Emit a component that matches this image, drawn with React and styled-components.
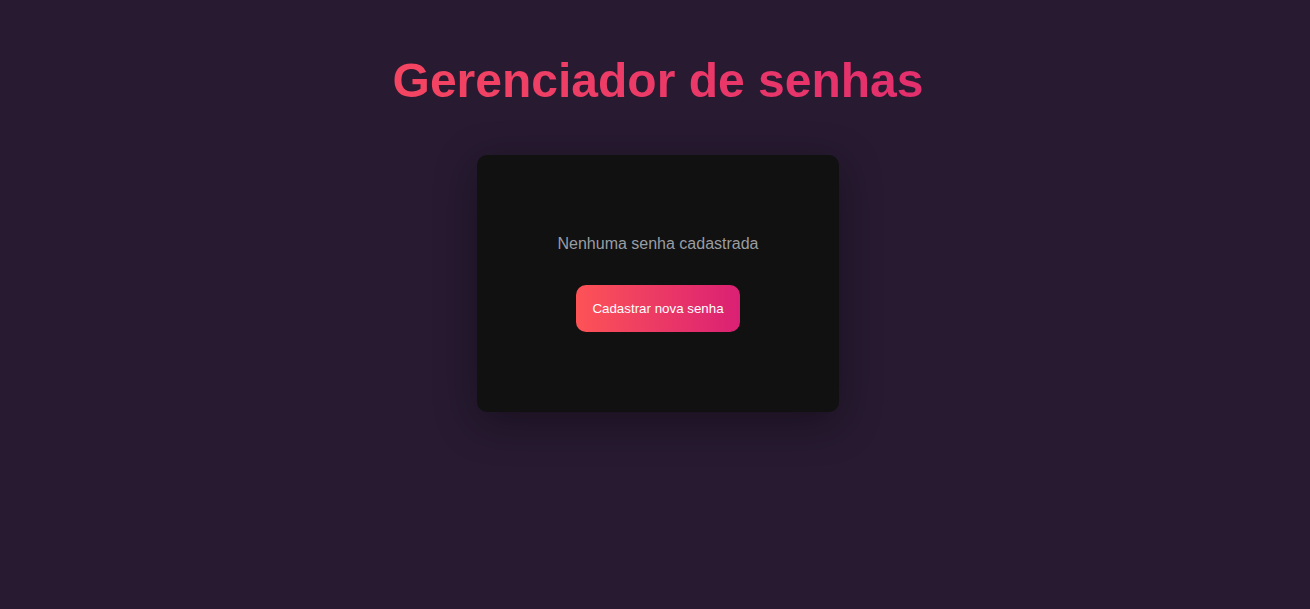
import React from "react";
import styled, { createGlobalStyle } from "styled-components";

const GlobalStyle = createGlobalStyle`
  * {
    box-sizing: border-box;
  }

  body {
    margin: 0;
    background-color: #271a31;
    font-family: "Liberation Sans", Arial, sans-serif;
  }
`;

const App = () => {
  return (
    <>
      <GlobalStyle />
      <StPage>
        <StTitle>Gerenciador de senhas</StTitle>
        <StCard>
          <StEmpty>Nenhuma senha cadastrada</StEmpty>
          <StNewBtn>Cadastrar nova senha</StNewBtn>
        </StCard>
      </StPage>
    </>
  );
};

export default App;

const StPage = styled.main`
  display: flex;
  flex-direction: column;
  align-items: center;

  min-height: 100vh;
  padding: 54px 0 0 6px;
`;

const StTitle = styled.h1`
  margin: 0 0 47px;

  font-size: 48px;
  font-weight: 700;
  line-height: 54px;

  background: linear-gradient(to right, #f44562, #e32f6d);
  -webkit-background-clip: text;
  background-clip: text;
  color: transparent;
`;

const StCard = styled.section`
  display: flex;
  flex-direction: column;
  align-items: center;

  padding: 80px;
  border-radius: 10px;

  background-color: #111111;
  box-shadow: 0 10px 40px rgba(0, 0, 0, 0.35);
`;

const StEmpty = styled.p`
  margin: 0 0 32px;

  color: #999da3;
  font-size: 16px;
  line-height: 18px;
`;

const StNewBtn = styled.button`
  width: 164px;
  height: 47px;

  border: none;
  border-radius: 10px;

  cursor: pointer;

  color: #fff;
  font-family: "Liberation Sans", Arial, sans-serif;
  font-size: 13.33px;

  background: linear-gradient(to right, #fd5356, #da2074);
`;
